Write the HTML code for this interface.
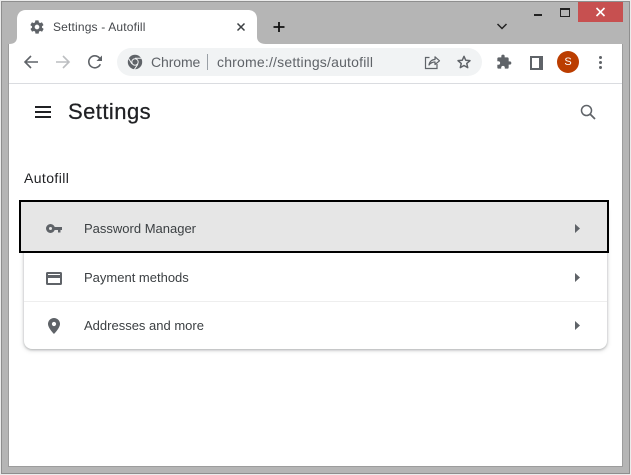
<!DOCTYPE html>
<html>
<head>
<meta charset="utf-8">
<style>
html,body{margin:0;padding:0}
body{width:631px;height:475px;overflow:hidden;position:relative;background:#ececec;font-family:"Liberation Sans",sans-serif}
div,span,svg{position:absolute;display:block}
.t{white-space:nowrap;color:#3c4043;line-height:16px}
</style>
</head>
<body>
<!-- frame -->
<div style="left:1px;top:1px;width:627px;height:471px;background:#b5b5b5;border:1px solid #8e8e8e"></div>

<!-- window -->
<div style="left:9px;top:44px;width:613px;height:422px;background:#fff;box-shadow:0 0 0 1px #9c9c9c"></div>
<div style="left:2px;top:2px;width:627px;height:42px;background:#b5b5b5"></div>

<!-- tab -->
<svg style="left:0;top:0" width="300" height="46" viewBox="0 0 300 46"><path d="M9 44C15 44 17 41 17 37V19C17 14 20 10 26 10H248C254 10 257 14 257 19V37C257 41 260 44 266 44Z" fill="#fff"/></svg>
<svg style="left:29px;top:19px" width="16" height="16" viewBox="0 0 24 24"><path fill="#5f6368" d="M19.4 13c.1-.3.1-.7.1-1s0-.7-.1-1l2.1-1.6c.2-.1.2-.4.1-.6l-2-3.500c-.1-.2-.4-.3-.6-.2l-2.500 1c-.5-.4-1.100-.7-1.700-1l-.4-2.600c0-.3-.2-.5-.5-.5h-4c-.2 0-.5.2-.5.5l-.4 2.600c-.6.3-1.200.6-1.700 1l-2.500-1c-.2-.1-.5 0-.6.2l-2 3.500c-.1.2-.1.5.1.6L4.600 11c-.1.3-.1.7-.1 1s0 .7.1 1l-2.100 1.600c-.2.1-.2.4-.1.6l2 3.500c.1.2.4.3.6.2l2.500-1c.5.4 1.100.7 1.700 1l.4 2.600c0 .3.3.5.5.5h4c.3 0 .5-.2.5-.5l.4-2.600c.6-.3 1.200-.6 1.700-1l2.500 1c.2.1.5 0 .6-.2l2-3.500c.1-.2.1-.5-.1-.6zM12 15.500a3.500 3.500 0 1 1 0-7 3.500 3.500 0 0 1 0 7z"/></svg>
<div class="t" style="left:53px;top:19px;font-size:12px;color:#45484c;letter-spacing:.17px">Settings - Autofill</div>
<svg style="left:236px;top:22px" width="10" height="10" viewBox="0 0 10 10"><path d="M1.500 1.500L8.500 8.500M8.500 1.500L1.500 8.500" stroke="#3c4043" stroke-width="1.500" fill="none"/></svg>
<svg style="left:272px;top:20px" width="14" height="14" viewBox="0 0 14 14"><path d="M7 2V12M1.500 7H12.500" stroke="#111" stroke-width="1.800" fill="none"/></svg>

<!-- window controls -->
<svg style="left:496px;top:22px" width="12" height="9" viewBox="0 0 12 9"><path d="M1.500 2L6 6.500L10.500 2" stroke="#222" stroke-width="1.500" fill="none"/></svg>
<div style="left:534px;top:14px;width:8px;height:2px;background:#222"></div>
<div style="left:560px;top:8px;width:8px;height:6px;border:1px solid #222;border-top-width:2px"></div>
<div style="left:578px;top:2px;width:45px;height:20px;background:#c75050"></div>
<svg style="left:595px;top:7px" width="11" height="10" viewBox="0 0 11 10"><path d="M1.500 1L9.500 9M9.500 1L1.500 9" stroke="#fff" stroke-width="1.600" fill="none"/></svg>

<!-- toolbar -->
<div style="left:9px;top:83px;width:613px;height:1px;background:#dadce0"></div>
<svg style="left:23px;top:54px" width="16" height="16" viewBox="0 0 16 16"><path d="M15 8H2M8 2L2 8L8 14" stroke="#5f6368" stroke-width="1.600" fill="none"/></svg>
<svg style="left:55px;top:54px" width="16" height="16" viewBox="0 0 16 16"><path d="M1 8H14M8 2L14 8L8 14" stroke="#bcbec1" stroke-width="1.600" fill="none"/></svg>
<svg style="left:87px;top:54px" width="16" height="16" viewBox="0 0 16 16"><path d="M13.300 10.200A6 6 0 1 1 12.300 3.800L14 5.600" stroke="#5f6368" stroke-width="1.600" fill="none"/><path d="M15 1.500V7H9.500Z" fill="#5f6368"/></svg>
<div style="left:117px;top:48px;width:365px;height:28px;border-radius:14px;background:#f1f3f4"></div>
<svg style="left:127px;top:54px" width="16" height="16" viewBox="0 0 16 16"><circle cx="8" cy="8" r="7.200" fill="#5f6368"/><circle cx="8" cy="8" r="3.700" fill="#f1f3f4"/><circle cx="8" cy="8" r="2.700" fill="#5f6368"/><path d="M8 4.300H15M5 10L1.600 4.500M10.900 10.200L7.400 15.400" stroke="#f1f3f4" stroke-width="1"/></svg>
<div class="t" style="left:151px;top:54px;font-size:14px;color:#5f6368;letter-spacing:-.1px">Chrome</div>
<div style="left:207px;top:54px;width:1px;height:16px;background:#9aa0a6"></div>
<div class="t" style="left:217px;top:54px;font-size:14px;color:#5f6368;letter-spacing:.2px">chrome://settings/autofill</div>
<svg style="left:424px;top:54px" width="17" height="16" viewBox="0 0 17 16"><path d="M5.500 3.500H1.500V14.500H13V10" stroke="#5f6368" stroke-width="1.200" fill="none"/><path d="M5 11C5.500 7.500 8 5.500 11 5.500V2.800L15.500 6.800L11 10.500V8C8.500 8 6.500 9 5 11Z" stroke="#5f6368" stroke-width="1.200" fill="none" stroke-linejoin="round"/></svg>
<svg style="left:456px;top:54px" width="16" height="16" viewBox="0 0 24 24"><path d="M12 3.500L14.600 9.400L21 10L16.100 14.200L17.600 20.500L12 17.200L6.400 20.500L7.900 14.200L3 10L9.400 9.400Z" stroke="#5f6368" stroke-width="2.200" fill="none" stroke-linejoin="round"/></svg>
<svg style="left:496px;top:54px" width="16" height="16" viewBox="0 0 24 24"><path fill="#5f6368" d="M20.500 11H19V7a2 2 0 0 0-2-2h-4V3.500a2.500 2.500 0 0 0-5 0V5H4a2 2 0 0 0-2 2v3.800h1.500a2.700 2.700 0 0 1 0 5.400H2V20a2 2 0 0 0 2 2h3.800v-1.500a2.700 2.700 0 0 1 5.400 0V22H17a2 2 0 0 0 2-2v-4h1.500a2.500 2.500 0 0 0 0-5z"/></svg>
<div style="left:530px;top:56px;width:9px;height:10px;border:2px solid #5f6368;border-right:0"></div>
<div style="left:539px;top:56px;width:4px;height:14px;background:#5f6368"></div>
<div style="left:557px;top:51px;width:22px;height:22px;border-radius:50%;background:#bb3d00;color:#fff;font-size:11px;line-height:22px;text-align:center">S</div>
<div style="left:599px;top:56px;width:3px;height:3px;border-radius:50%;background:#5f6368"></div>
<div style="left:599px;top:61px;width:3px;height:3px;border-radius:50%;background:#5f6368"></div>
<div style="left:599px;top:66px;width:3px;height:3px;border-radius:50%;background:#5f6368"></div>

<!-- header -->
<div style="left:35px;top:106px;width:16px;height:2px;background:#202124"></div>
<div style="left:35px;top:111px;width:16px;height:2px;background:#202124"></div>
<div style="left:35px;top:116px;width:16px;height:2px;background:#202124"></div>
<div class="t" style="left:68px;top:100px;font-size:22px;line-height:24px;color:#202124;letter-spacing:.45px;-webkit-text-stroke:.25px #202124">Settings</div>
<svg style="left:578px;top:102px" width="20" height="20" viewBox="0 0 20 20"><circle cx="8.500" cy="8.500" r="5" stroke="#5f6368" stroke-width="1.500" fill="none"/><path d="M12 12L17 17" stroke="#5f6368" stroke-width="1.800" fill="none"/></svg>

<div class="t" style="left:24px;top:170px;font-size:14px;color:#202124;letter-spacing:.4px">Autofill</div>

<!-- card -->
<div style="left:24px;top:205px;width:583px;height:144px;border-radius:8px;background:#fff;box-shadow:0 1px 2px rgba(60,64,67,.3),0 1px 4px 1px rgba(60,64,67,.15)"></div>
<div style="left:24px;top:301px;width:583px;height:1px;background:#eeeeee"></div>
<div style="left:19px;top:200px;width:586px;height:49px;background:#e6e6e6;border:2px solid #000"></div>

<svg style="left:46px;top:224px" width="16" height="9" viewBox="0 0 16 9"><circle cx="4.500" cy="4.500" r="3" stroke="#5f6368" stroke-width="3" fill="none"/><path d="M7 3H16V6H14.500V8.500H12V6H7Z" fill="#5f6368"/></svg>
<div class="t" style="left:84px;top:221px;font-size:13px">Password Manager</div>
<svg style="left:575px;top:224px" width="5" height="9" viewBox="0 0 5 9"><path d="M0 0L5 4.500L0 9Z" fill="#5f6368"/></svg>

<svg style="left:46px;top:272px" width="16" height="13" viewBox="0 0 16 13"><path fill="#5f6368" fill-rule="evenodd" d="M1.500 0H14.500A1.500 1.500 0 0 1 16 1.500V11.500A1.500 1.500 0 0 1 14.500 13H1.500A1.500 1.500 0 0 1 0 11.500V1.500A1.500 1.500 0 0 1 1.500 0ZM2 2V3H14V2ZM2 6V11H14V6Z"/></svg>
<div class="t" style="left:84px;top:270px;font-size:13px">Payment methods</div>
<svg style="left:575px;top:273px" width="5" height="9" viewBox="0 0 5 9"><path d="M0 0L5 4.500L0 9Z" fill="#5f6368"/></svg>

<svg style="left:48px;top:318px" width="12" height="16" viewBox="0 0 12 16"><path fill="#5f6368" fill-rule="evenodd" d="M6 0A6 6 0 0 1 12 6C12 10 6 16 6 16C6 16 0 10 0 6A6 6 0 0 1 6 0ZM6 3.900A2.100 2.100 0 1 0 6 8.100A2.100 2.100 0 1 0 6 3.900Z"/></svg>
<div class="t" style="left:84px;top:318px;font-size:13px">Addresses and more</div>
<svg style="left:575px;top:321px" width="5" height="9" viewBox="0 0 5 9"><path d="M0 0L5 4.500L0 9Z" fill="#5f6368"/></svg>
</body>
</html>
